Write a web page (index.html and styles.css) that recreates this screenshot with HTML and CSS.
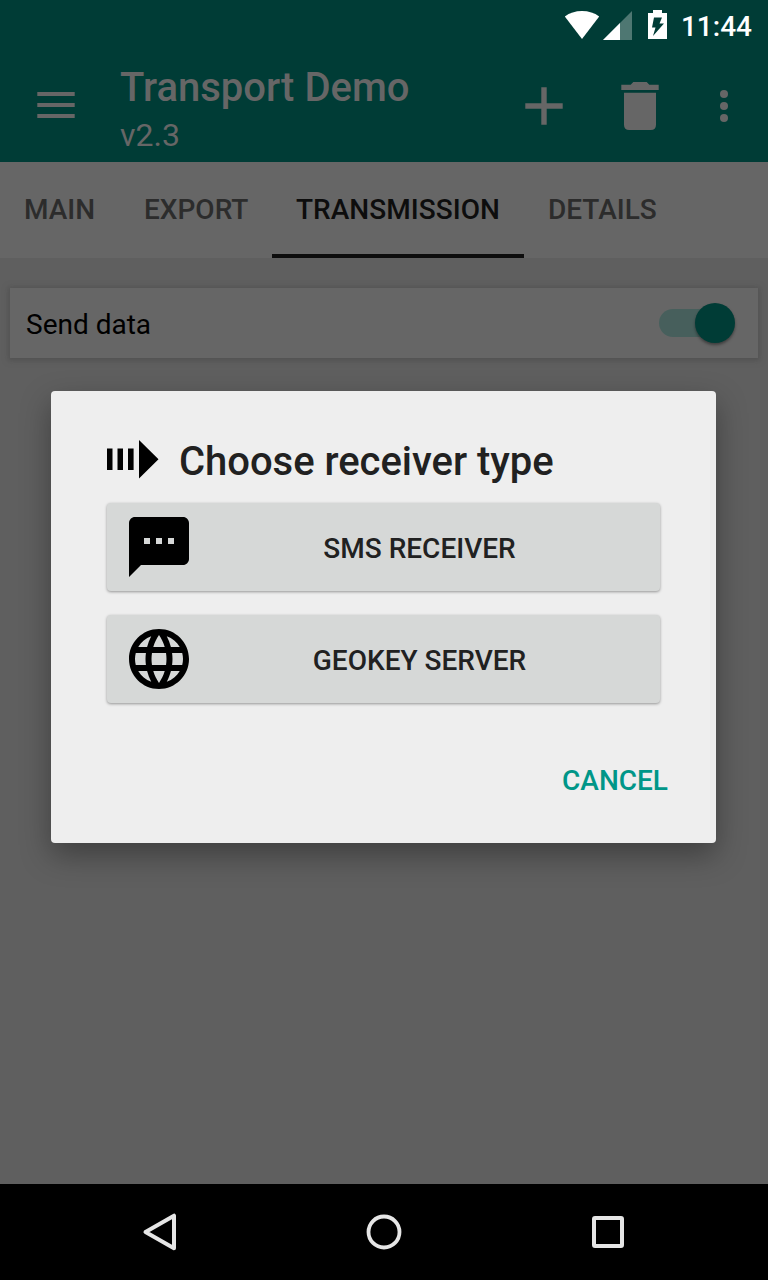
FILE: index.html
```html
<!DOCTYPE html>
<html lang="en">
<head>
<meta charset="utf-8">
<title>Transport Demo</title>
<link rel="stylesheet" href="styles.css">
</head>
<body>
<div class="screen">
  <header class="header">
    <div class="status">
      <svg class="wifi" width="36" height="30" viewBox="0 0 36 30"><path d="M.8 6.500Q8 1 18 1t17.200 5.500L18 29z" fill="#fff"/></svg>
      <svg class="signal" width="29" height="29" viewBox="0 0 29 29"><path d="M0 29 29 0v29z" fill="#4e7772"/><path d="M0 29 17 12v17z" fill="#fff"/></svg>
      <svg class="battery" width="19" height="30" viewBox="0 0 19 30"><path d="M5 0h9v3h5v26H0V3h5z" fill="#fff"/><path d="M6 7.500h8L11.500 13.500H16L5 26l2.500-8.500H4z" fill="#003c36"/></svg>
      <span class="clock">11:44</span>
    </div>
    <div class="toolbar">
      <svg class="menu" width="38" height="26" viewBox="0 0 38 26"><path d="M.3 0h37.400v4H.3zM.3 11h37.400v4H.3zM.3 22h37.400v4H.3z" fill="#666"/></svg>
      <div class="titles">
        <div class="title">Transport Demo</div>
        <div class="subtitle">v2.3</div>
      </div>
      <div class="actions">
        <svg width="38" height="38" viewBox="0 0 38 38"><path d="M16.300.3h5.400v16h16v5.400h-16v16h-5.400v-16h-16v-5.400h16z" fill="#666"/></svg>
        <svg width="38" height="48" viewBox="0 0 38 48"><path d="M.3 2.700h9.400L12.300 0h13.400l2.600 2.700h9.400V8H.3zM3 10.700h32v32q0 5.300-5.300 5.300H8.300Q3 48 3 42.700z" fill="#666"/></svg>
        <svg width="8" height="32" viewBox="0 0 8 32" fill="#666"><circle cx="4" cy="4" r="4"/><circle cx="4" cy="16" r="4"/><circle cx="4" cy="28" r="4"/></svg>
      </div>
    </div>
  </header>
  <nav class="tabs">
    <div class="tab">MAIN</div>
    <div class="tab">EXPORT</div>
    <div class="tab active">TRANSMISSION</div>
    <div class="tab">DETAILS</div>
  </nav>
  <main class="content">
    <div class="card">
      <span>Send data</span>
      <div class="switch"><div class="knob"></div></div>
    </div>
  </main>
  <footer class="navbar">
    <svg width="40" height="40" viewBox="0 0 40 40"><path d="M5.500 20 34 3.700v32.600z" fill="none" stroke="#e6e6e6" stroke-width="4" stroke-linejoin="round"/></svg>
    <svg width="40" height="40" viewBox="0 0 40 40"><circle cx="20" cy="20" r="15.500" fill="none" stroke="#e6e6e6" stroke-width="3.800"/></svg>
    <svg width="40" height="40" viewBox="0 0 40 40"><rect x="6" y="6" width="28" height="28" rx="1" fill="none" stroke="#e6e6e6" stroke-width="4"/></svg>
  </footer>
  <section class="dialog">
    <div class="heading">
      <svg width="52" height="40" viewBox="0 0 52 40"><path d="M0 8.500h5.500v21.500H0zM10.500 8.500H16v21.500h-5.500zM21 8.500h5.600v21.500H21zM32 0l19.500 19.300L32 38.600z"/></svg>
      <h1>Choose receiver type</h1>
    </div>
    <div class="option">
      <svg width="60" height="60" viewBox="2 2 20 20"><path d="M20 2H4c-1.100 0-2 .9-2 2v18l4-4h14c1.100 0 2-.9 2-2V4c0-1.100-.9-2-2-2zM9 11H7V9h2zm4 0h-2V9h2zm4 0h-2V9h2z"/></svg>
      <span>SMS RECEIVER</span>
    </div>
    <div class="option">
      <svg width="60" height="60" viewBox="2 2 20 20"><path d="M11.990 2C6.470 2 2 6.480 2 12s4.470 10 9.990 10C17.520 22 22 17.520 22 12S17.520 2 11.990 2zm6.930 6h-2.950c-.32-1.250-.78-2.450-1.380-3.560 1.840.63 3.370 1.910 4.330 3.560zM12 4.040c.83 1.200 1.480 2.530 1.910 3.960h-3.820c.43-1.430 1.080-2.760 1.910-3.960zM4.260 14C4.100 13.360 4 12.690 4 12s.1-1.360.26-2h3.380c-.08.66-.14 1.320-.14 2s.06 1.340.14 2zm.82 2h2.950c.32 1.250.78 2.450 1.380 3.560-1.840-.63-3.370-1.900-4.330-3.560zm2.950-8H5.080c.96-1.660 2.490-2.930 4.330-3.560C8.810 5.550 8.350 6.750 8.030 8zM12 19.960c-.83-1.200-1.480-2.530-1.910-3.960h3.820c-.43 1.430-1.080 2.760-1.910 3.960zM14.340 14H9.660c-.09-.66-.16-1.320-.16-2s.07-1.350.16-2h4.680c.09.65.16 1.320.16 2s-.07 1.340-.16 2zm.25 5.560c.6-1.110 1.060-2.310 1.380-3.560h2.950c-.96 1.650-2.490 2.930-4.330 3.560zM16.360 14c.08-.66.14-1.320.14-2s-.06-1.340-.14-2h3.380c.16.64.26 1.310.26 2s-.1 1.360-.26 2z"/></svg>
      <span>GEOKEY SERVER</span>
    </div>
    <div class="cancel">CANCEL</div>
  </section>
</div>
</body>
</html>
```
FILE: styles.css
```css
* { box-sizing: border-box; }
body { margin: 0; font-family: Roboto, sans-serif; }
svg { display: block; flex: none; }
.screen {
  position: relative;
  display: flex;
  flex-direction: column;
  width: 768px;
  height: 1280px;
  overflow: hidden;
  background: #5f5f5f;
}
.header { height: 162px; background: #003c36; color: #666; }
.status {
  display: flex;
  align-items: flex-start;
  height: 48px;
  padding: 10px 16px 0 0;
  justify-content: flex-end;
}
.signal { margin: 1px 16px 0 3px; }
.clock { margin-left: 14px; font-size: 28px; line-height: 33px; font-weight: 500; color: #fff; }
.toolbar { display: flex; height: 114px; padding: 16px 40px 0 37px; }
.menu { margin-top: 28px; }
.titles { margin-left: 45px; flex: 1; }
.title { font-size: 40px; line-height: 47px; font-weight: 500; white-space: nowrap; }
.subtitle { margin-top: 5px; font-size: 32px; line-height: 38px; }
.actions { display: flex; align-items: center; height: 84px; gap: 58px; }
.actions svg:last-child { margin-left: 3px; }
.tabs {
  display: grid;
  grid-template-columns: 120px 152px 252px 156px;
  height: 96px;
  background: #666;
  color: #2c2c2c;
}
.tab { padding-left: 24px; font-size: 28px; line-height: 96px; font-weight: 500; }
.tab.active { height: 96px; color: #0d0d0d; border-bottom: 4px solid #0d0d0d; letter-spacing: .04px; }
.content { flex: 1; padding: 30px 10px; }
.card {
  display: flex;
  align-items: center;
  justify-content: space-between;
  height: 70px;
  padding: 0 23px 0 16px;
  background: #666;
  box-shadow: 0 1px 5px 2px #535353;
  font-size: 28px;
  color: #000;
}
.card span { padding-top: 3px; line-height: 32px; }
.switch {
  display: flex;
  align-items: center;
  justify-content: flex-end;
  width: 76px;
  height: 28px;
  border-radius: 14px;
  background: linear-gradient(90deg, #475f5c 56px, transparent 56px);
}
.knob { width: 40px; height: 40px; border-radius: 50%; background: #003c36; box-shadow: 0 2px 3px rgba(0, 0, 0, .4); }
.navbar { display: flex; align-items: center; justify-content: center; gap: 184px; height: 96px; background: #000; }
.dialog {
  position: absolute;
  left: 51px;
  top: 391px;
  width: 665px;
  height: 452px;
  padding: 47px 56px 0 55.5px;
  border-radius: 4px;
  background: #eee;
  box-shadow: 0 12px 30px rgba(0, 0, 0, .34);
  color: #212121;
}
.heading { display: flex; height: 65px; margin-left: .5px; }
.heading svg { margin-top: 2px; }
.heading h1 { margin: 0 0 0 20px; font-size: 40px; line-height: 47px; font-weight: 500; letter-spacing: -.03px; }
.option {
  display: flex;
  align-items: center;
  height: 88px;
  margin-bottom: 24px;
  padding: 0 10px 0 22.5px;
  border-radius: 4px;
  background: #d6d8d7;
  box-shadow: 0 1px 3px rgba(0, 0, 0, .38);
  font-size: 28px;
  line-height: 33px;
  font-weight: 500;
}
.option svg { fill: #000; }
.option span { flex: 1; padding-top: 2px; text-align: center; }
.cancel { margin: 61px -8px 0 0; text-align: right; font-size: 28px; line-height: 33px; font-weight: 500; color: #009688; }
```
